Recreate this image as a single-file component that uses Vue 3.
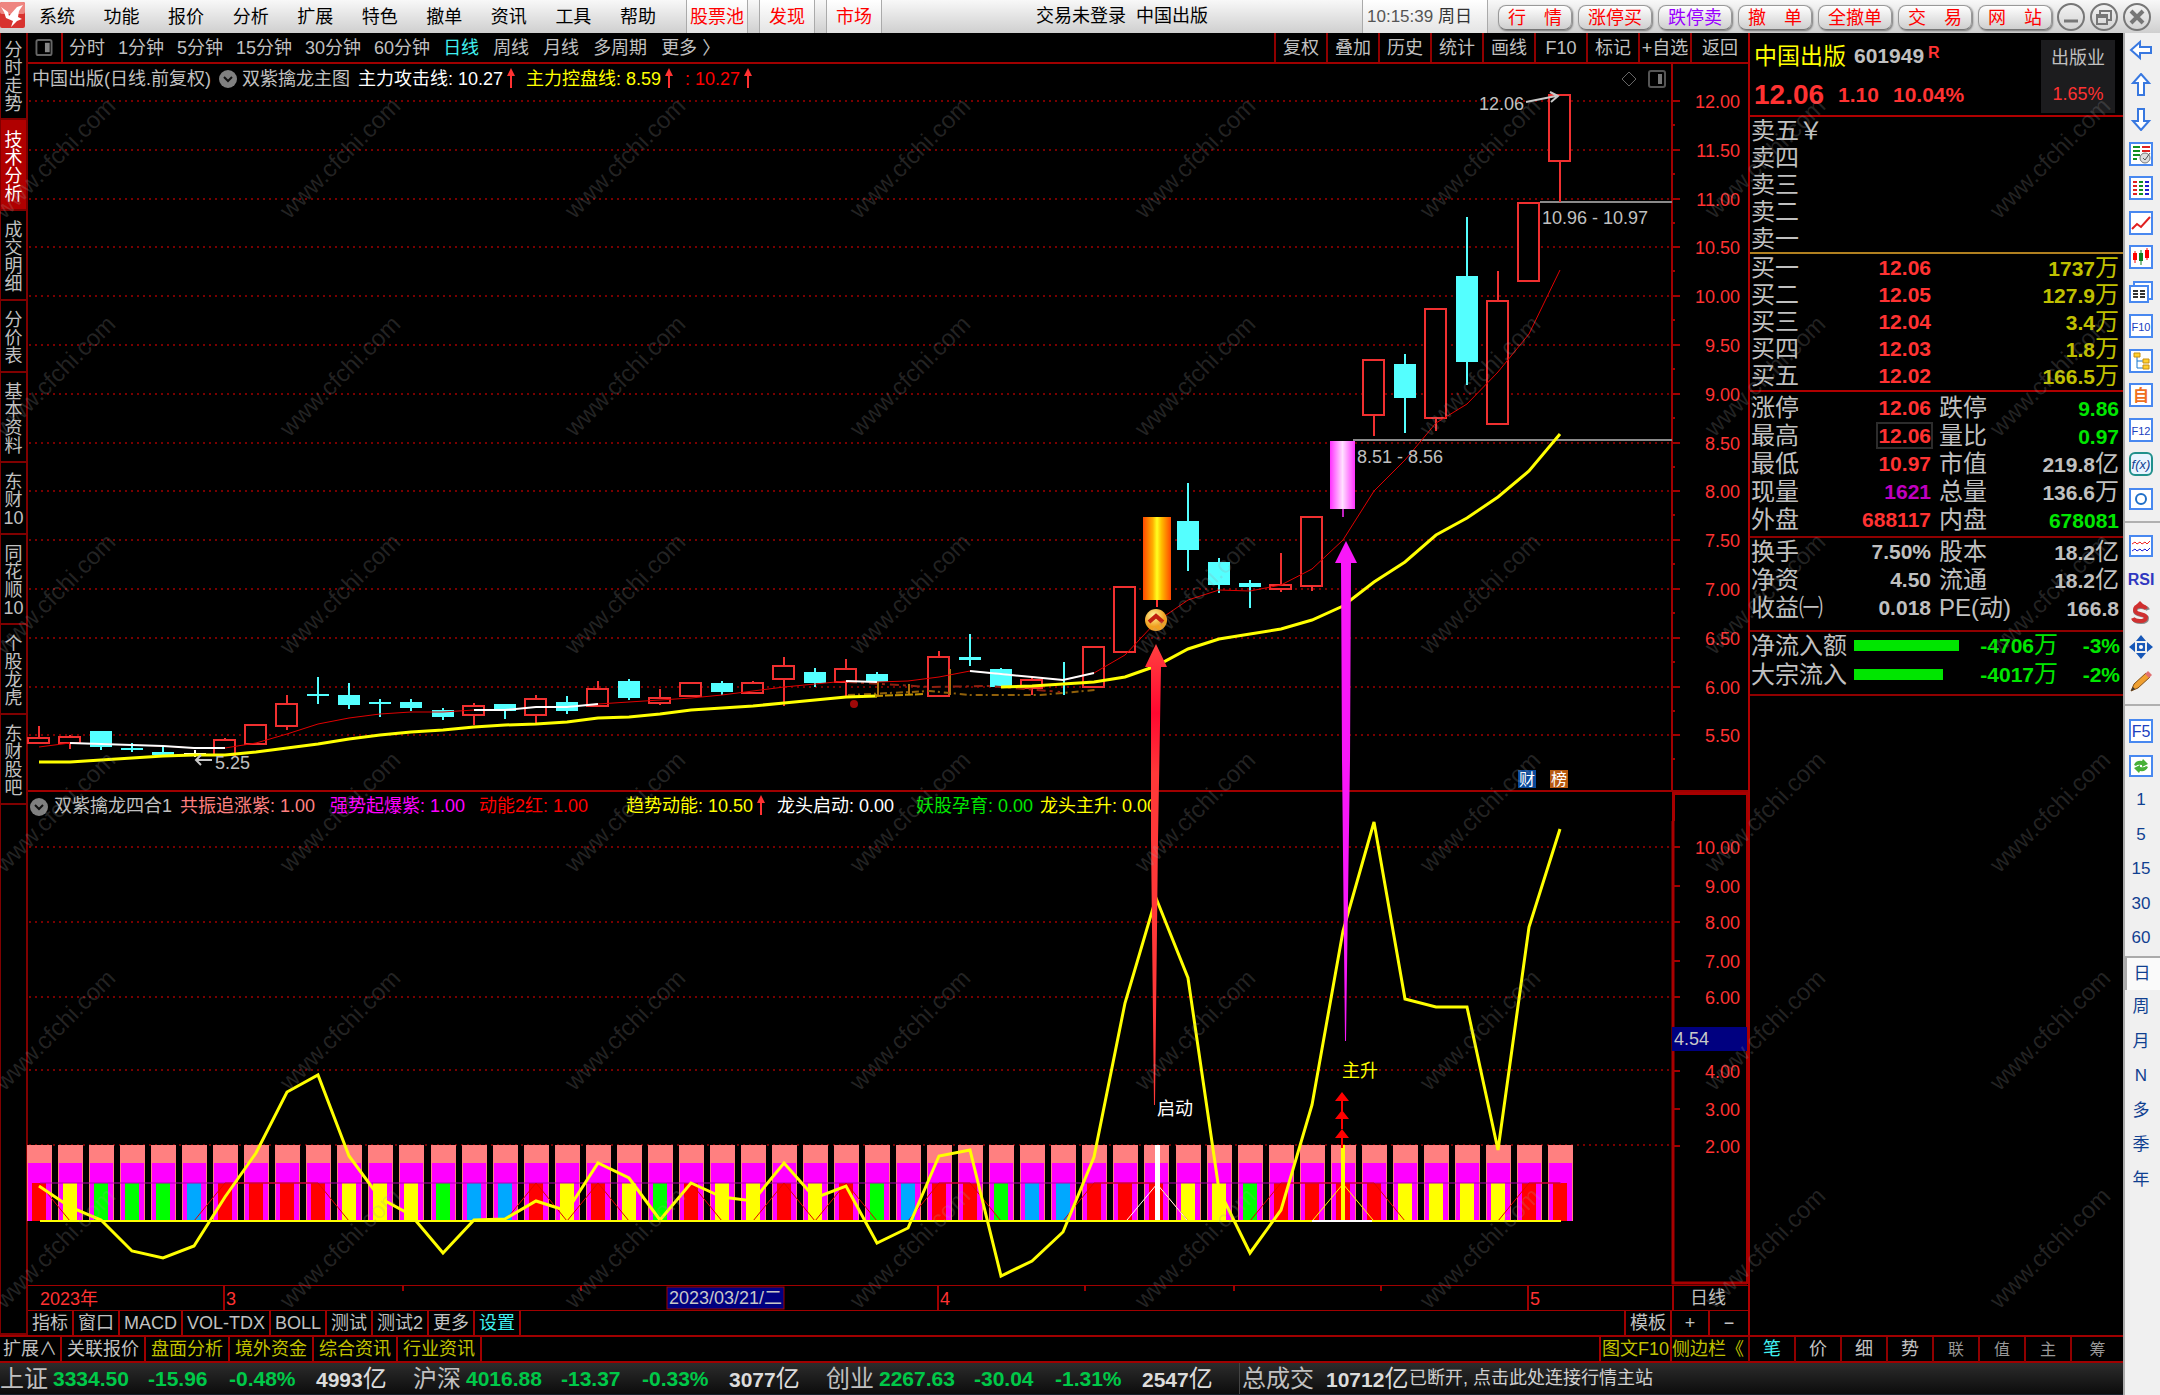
<script setup>
const menus = ['系统', '功能', '报价', '分析', '扩展', '特色', '撤单', '资讯', '工具', '帮助']
const hot = ['股票池', '发现', '市场']
const actions = [
  { t: '行　情' }, { t: '涨停买' }, { t: '跌停卖', sell: true }, { t: '撤　单' },
  { t: '全撤单' }, { t: '交　易' }, { t: '网　站' },
]
const sideTabs = [
  ['分', '时', '走', '势'], ['技', '术', '分', '析'], ['成', '交', '明', '细'], ['分', '价', '表'],
  ['基', '本', '资', '料'], ['东', '财', '10'], ['同', '花', '顺', '10'], ['个', '股', '龙', '虎'],
  ['东', '财', '股', '吧'],
]
const minutes = ['分时', '1分钟', '5分钟', '15分钟', '30分钟', '60分钟']
const periods = ['日线', '周线', '月线', '多周期', '更多 〉']
const chartTools = ['复权', '叠加', '历史', '统计', '画线', 'F10', '标记', '+自选', '返回']
const indicatorTabs = ['指标', '窗口', 'MACD', 'VOL-TDX', 'BOLL', '测试', '测试2', '更多', '设置']
const extTabs = ['扩展∧', '关联报价', '盘面分析', '境外资金', '综合资讯', '行业资讯']
const quoteTabs = ['笔', '价', '细', '势', '联', '值', '主', '筹']

const X0 = 39
const x = (i) => Math.round(X0 + (i * 1521) / 49)

// kind, body top, body bottom, high, low
const candles = [
  ['r', 738, 743, 726, 744], ['r', 737, 743, 735, 749], ['c', 731, 747, 731, 750], ['c', 748, 750, 743, 752],
  ['c', 752, 755, 747, 755], ['w', 753, 755, 750, 757], ['r', 740, 755, 738, 755], ['r', 725, 744, 725, 744],
  ['r', 704, 726, 695, 730], ['c', 694, 696, 677, 704], ['c', 695, 705, 683, 709], ['c', 702, 704, 699, 717],
  ['c', 702, 708, 699, 711], ['c', 710, 717, 708, 720], ['r', 706, 715, 703, 725], ['c', 704, 711, 704, 719],
  ['r', 699, 715, 695, 723], ['c', 702, 711, 696, 714], ['r', 689, 706, 681, 706], ['c', 681, 698, 679, 700],
  ['r', 698, 703, 689, 705], ['r', 683, 696, 683, 696], ['c', 683, 692, 681, 695], ['r', 683, 693, 681, 694],
  ['r', 666, 679, 657, 706], ['c', 672, 683, 668, 687], ['r', 669, 682, 659, 696], ['c', 674, 682, 672, 682],
  ['n', 684, 694, 684, 694], ['r', 657, 696, 651, 696], ['c', 657, 660, 634, 666], ['c', 669, 687, 668, 687],
  ['r', 680, 688, 678, 695], ['l', 680, 681, 662, 695], ['r', 647, 687, 647, 687], ['r', 587, 652, 587, 652],
  ['o', 517, 600, 517, 607], ['c', 521, 550, 483, 571], ['c', 562, 585, 558, 593], ['c', 583, 587, 580, 608],
  ['r', 585, 589, 553, 592], ['r', 517, 586, 517, 591], ['m', 441, 509, 441, 517], ['r', 360, 415, 360, 436],
  ['c', 364, 398, 354, 433], ['r', 309, 418, 309, 431], ['c', 276, 362, 217, 385], ['r', 301, 424, 271, 424],
  ['r', 203, 281, 203, 281], ['r', 95, 161, 95, 202],
]
const drawn = candles
  .map(([kind, top, bottom, high, low], i) => ({ i, kind, top, bottom, high, low, x: x(i) }))
const hollow = drawn.filter((c) => c.kind === 'r')
const solid = drawn.filter((c) => c.kind === 'c')

const join = (ys, from = 0) => ys.map((y, i) => `${x(i + from)},${y}`).join(' ')
const attack = [
  747, 743, 744, 745, 746, 748, 748, 743, 734, 724, 718, 714, 712, 712, 710, 710, 707, 707, 704, 702, 700, 698, 695, 691, 687,
  684, 681, 682, 681, 677, 671, 674, 677, 680, 673, 655, 622, 600, 590, 591, 585, 569, 540, 491, 460, 423, 404, 372, 334, 270,
]
const control = [
  762, 762, 760, 758, 756, 755, 755, 752, 748, 744, 739, 735, 732, 730, 727, 725, 724, 722, 718, 717, 714, 710, 708, 706, 703,
  700, 697, 696,
]
const controlTail = [
  687, 686, 684, 682, 677, 666, 649, 639, 634, 629, 620, 606, 582, 562, 535, 518, 497, 471, 434,
]
const trend = [
  1186, 1207, 1220, 1251, 1258, 1246, 1197, 1153, 1092, 1075, 1156, 1198, 1215, 1253, 1220, 1219, 1201, 1211, 1163, 1178,
  1220, 1183, 1197, 1201, 1163, 1198, 1186, 1243, 1228, 1156, 1150, 1276, 1261, 1232, 1157, 1003, 898, 978, 1190, 1253,
  1210, 1105, 931, 822, 999, 1007, 1007, 1150, 927, 829,
]
const whites = [[1, 6], [14, 18], [26, 27], [30, 34]].map(([a, b]) => join(attack.slice(a, b + 1), a))

const kinds = 'RYGGGBRRRRYYYGBBRYRYGRYYRYRGBRRGBBRRRYYGRRRRYYYYRR'.split('')
const palette = { R: '#ff0000', Y: '#ffff00', G: '#00ff00', B: '#00a8ff' }
const bars = kinds.map((k, i) => ({ x: x(i), color: palette[k] }))
const redPulse = join(kinds.map((k) => (k === 'R' ? 1183 : 1221)))

const priceLabels = Array.from({ length: 14 }, (_, i) => ({
  t: (12 - i / 2).toFixed(2),
  y: Math.round(101 + i * 48.8),
}))
const minorTicks = priceLabels.map((p) => p.y + 24)
const subLabels = [
  ['10.00', 847], ['9.00', 886], ['8.00', 922], ['7.00', 961], ['6.00', 997], ['4.00', 1071], ['3.00', 1109], ['2.00', 1146],
]
const subGrid = [847, 922, 997, 1070, 1145]

const mainLegend = [
  { t: '主力攻击线: 10.27', c: 'white', up: true },
  { t: '主力控盘线: 8.59', c: 'yellow', up: true },
  { t: ': 10.27', c: 'red', up: true },
]
const subLegend = [
  { t: '共振追涨紫: 1.00', c: 'salmon' }, { t: '强势起爆紫: 1.00', c: 'magenta' }, { t: '动能2红: 1.00', c: 'red' },
  { t: '趋势动能: 10.50', c: 'yellow', up: true }, { t: '龙头启动: 0.00', c: 'white' },
  { t: '妖股孕育: 0.00', c: 'green' }, { t: '龙头主升: 0.00', c: 'yellow' },
]

const sells = ['卖五', '卖四', '卖三', '卖二', '卖一']
const buys = [
  ['买一', '12.06', '1737', '万'], ['买二', '12.05', '127.9', '万'], ['买三', '12.04', '3.4', '万'],
  ['买四', '12.03', '1.8', '万'], ['买五', '12.02', '166.5', '万'],
]
const stats = [
  ['涨停', '12.06', 'up', '跌停', '9.86', '', 'down'],
  ['最高', '12.06', 'up boxed', '量比', '0.97', '', 'down'],
  ['最低', '10.97', 'up', '市值', '219.8', '亿', ''],
  ['现量', '1621', 'now', '总量', '136.6', '万', ''],
  ['外盘', '688117', 'up', '内盘', '678081', '', 'down'],
]
const basics = [
  ['换手', '7.50%', '', '股本', '18.2', '亿', ''],
  ['净资', '4.50', '', '流通', '18.2', '亿', ''],
  ['收益㈠', '0.018', '', 'PE(动)', '166.8', '', ''],
]
const flows = [['净流入额', 105, '-4706', '-3%'], ['大宗流入', 89, '-4017', '-2%']]
const indices = [
  ['上证', '3334.50', '-15.96', '-0.48%', '4993'],
  ['沪深', '4016.88', '-13.37', '-0.33%', '3077'],
  ['创业', '2267.63', '-30.04', '-1.31%', '2547'],
]
const shortcuts = ['1', '5', '15', '30', '60', '日', '周', '月', 'N', '多', '季', '年']

const marks = []
for (let r = 0; r < 6; r++) for (let c = 0; c < 8; c++) marks.push({ x: 55 + c * 285, y: 125 + r * 218 })
</script>

<template>
  <div class="page">
    <header class="topbar">
      <svg class="logo" viewBox="0 0 25 26" aria-hidden="true">
        <rect width="25" height="26" rx="2" fill="#d8332f" />
        <rect width="25" height="12" rx="2" fill="#ee8580" />
        <path d="M1 5 L8 10 L9 14 L17 5 L23 3 L19 9 L18 15 L22 17 L17 19 L11 25 L13 19 L6 16 L4 10 Z" fill="#fff" />
      </svg>
      <nav class="menus"><button v-for="m in menus" :key="m">{{ m }}</button></nav>
      <nav class="hot"><button v-for="h in hot" :key="h">{{ h }}</button></nav>
      <div class="title">交易未登录&nbsp; 中国出版</div>
      <div class="clock">10:15:39 <span>周日</span></div>
      <div class="actions">
        <button v-for="a in actions" :key="a.t" :class="{ sell: a.sell }">{{ a.t }}</button>
      </div>
      <div class="window">
        <button aria-label="最小化"><svg viewBox="0 0 30 30"><circle cx="15" cy="15" r="13" /><path d="M8 19h14" stroke-width="3" /></svg></button>
        <button aria-label="还原"><svg viewBox="0 0 30 30"><circle cx="15" cy="15" r="13" /><path d="M11 13V9h11v9h-4M8 13h10v9H8zM8 15h10" stroke-width="2" /></svg></button>
        <button aria-label="关闭"><svg viewBox="0 0 30 30"><circle cx="15" cy="15" r="13" /><path d="M9 9l12 12M21 9L9 21" stroke-width="4" /></svg></button>
      </div>
    </header>

    <div class="body">
      <div class="left">
        <div class="work">
          <nav class="side">
            <button v-for="(t, i) in sideTabs" :key="i" :class="{ active: i === 1, first: i === 0 }">
              <span v-for="ch in t" :key="ch">{{ ch }}</span>
            </button>
            <div class="side-rest"></div>
          </nav>

          <main class="center">
            <div class="toolbar">
              <button class="panel-toggle" aria-label="面板">
                <svg viewBox="0 0 18 18"><rect x="1" y="1" width="16" height="16" rx="2" fill="none" stroke="#666" stroke-width="2" /><rect x="10" y="4" width="5" height="10" fill="#888" /></svg>
              </button>
              <div class="minutes"><button v-for="m in minutes" :key="m">{{ m }}</button></div>
              <div class="periods"><button v-for="(p, i) in periods" :key="p" :class="{ on: i === 0 }">{{ p }}</button></div>
              <div class="chart-tools"><button v-for="t in chartTools" :key="t">{{ t }}</button></div>
            </div>

            <div class="charts">
              <section>
                <div class="legend-row">
                  <div class="legend main-legend">
                    <span class="gray">中国出版(日线.前复权)</span>
                    <svg class="chev" viewBox="0 0 18 18"><circle cx="9" cy="9" r="9" fill="#808080" /><path d="M5 7l4 4 4-4" fill="none" stroke="#111" stroke-width="2" /></svg>
                    <span class="gray">双紫擒龙主图</span>
                    <span v-for="l in mainLegend" :key="l.t" :class="l.c">{{ l.t }}<svg class="up-arrow" viewBox="0 0 8 20"><path d="M4 0l4 8H5v12H3V8H0z" fill="#ff3232" /></svg></span>
                  </div>
                  <div class="pane-icons">
                    <svg viewBox="0 0 18 18"><path d="M9 2l7 7-7 7-7-7z" fill="none" stroke="#666" stroke-width="1" /></svg>
                    <svg viewBox="0 0 18 18"><rect x="1" y="1" width="16" height="16" rx="2" fill="none" stroke="#555" stroke-width="2" /><rect x="10" y="4" width="4" height="10" fill="#777" /></svg>
                  </div>
                  <div class="axis-head"></div>
                </div>
                <svg class="plot" viewBox="28 94 1720 697" role="img" aria-label="日K线图">
                  <defs>
                    <linearGradient id="gold"><stop offset="0" stop-color="#ff4800" /><stop offset=".35" stop-color="#ffb000" /><stop offset=".5" stop-color="#ffff20" /><stop offset=".65" stop-color="#ffc000" /><stop offset="1" stop-color="#ff4800" /></linearGradient>
                    <linearGradient id="violet"><stop offset="0" stop-color="#ff30ff" /><stop offset=".5" stop-color="#ffe0ff" /><stop offset="1" stop-color="#ff30ff" /></linearGradient>
                    <radialGradient id="coin" cx=".4" cy=".3"><stop offset="0" stop-color="#fff8a0" /><stop offset="1" stop-color="#f0a020" /></radialGradient>
                  </defs>
                  <g class="grid"><path v-for="p in priceLabels" :key="p.y" :d="`M29 ${p.y}H1672`" /></g>
                  <path class="frame" d="M1672 94V791" />
                  <g class="tick"><path v-for="p in priceLabels" :key="p.y" :d="`M1672 ${p.y}h8`" /><path v-for="m in minorTicks" :key="m" :d="`M1672 ${m}h3`" /></g>
                  <g class="axis-text"><text v-for="p in priceLabels" :key="p.t" x="1740" :y="p.y + 7">{{ p.t }}</text></g>
                  <path d="M1540 202H1672M1353 440H1672" stroke="#8a8a8a" stroke-width="2" />
                  <g class="hollow">
                    <template v-for="c in hollow" :key="c.i">
                      <path :d="`M${c.x} ${c.high}V${c.top}M${c.x} ${c.bottom}V${c.low}`" />
                      <rect :x="c.x - 11" :y="c.top" width="21" :height="c.bottom - c.top" />
                    </template>
                  </g>
                  <g class="solid">
                    <template v-for="c in solid" :key="c.i">
                      <path :d="`M${c.x} ${c.high}V${c.low}`" />
                      <rect :x="c.x - 11" :y="c.top" width="22" :height="c.bottom - c.top" />
                    </template>
                    <path d="M1064 662V695" />
                  </g>
                  <path d="M184 754h22M195 750v7" stroke="#fff" stroke-width="2" />
                  <path d="M1157 600v7" stroke="#ff3232" stroke-width="2" />
                  <path d="M1343 509v8" stroke="#c020c0" stroke-width="2" />
                  <rect x="1143" y="517" width="28" height="83" fill="url(#gold)" />
                  <rect x="1330" y="441" width="25" height="68" fill="url(#violet)" />
                  <g class="smudge">
                    <path d="M848 695L930 691 970 695 1040 695 1095 690" stroke="#90600a" stroke-dasharray="7 3 2 4" />
                    <path d="M848 682L930 687 990 686 1060 692" stroke="#902010" stroke-dasharray="9 4 3 5" />
                    <path d="M878 682V695M909 684V694M950 669V695" stroke="#b07010" />
                    <circle cx="854" cy="704" r="4" fill="#a00808" />
                  </g>
                  <polyline :points="join(attack)" fill="none" stroke="#e00000" stroke-width="1" />
                  <polyline v-for="w in whites" :key="w" :points="w" fill="none" stroke="#fff" stroke-width="2" />
                  <polyline :points="join(control)" class="ctrl" />
                  <polyline :points="join(controlTail, 31)" class="ctrl" />
                  <path d="M875 696L925 694" stroke="#c09000" stroke-width="2" stroke-dasharray="8 2" />
                  <circle cx="1156" cy="620" r="11" fill="url(#coin)" />
                  <path d="M1149 622l7-6 7 6" fill="none" stroke="#c02010" stroke-width="4" />
                  <g class="note">
                    <text x="1479" y="110">12.06</text>
                    <text x="1542" y="224">10.96 - 10.97</text>
                    <text x="1357" y="463">8.51 - 8.56</text>
                    <text x="215" y="769">5.25</text>
                  </g>
                  <path d="M1526 102L1556 96M1550 92l8 4-7 6M212 760H196M201 755l-5 5 5 5" fill="none" stroke="#c8c8c8" stroke-width="2" />
                  <rect x="1518" y="770" width="18" height="18" fill="#0a4a9a" />
                  <rect x="1550" y="770" width="18" height="18" fill="#b85a10" />
                  <text x="1519" y="785" class="badge">财</text>
                  <text x="1551" y="785" class="badge">榜</text>
                </svg>
              </section>

              <section class="sub">
                <div class="legend-row">
                  <div class="legend sub-legend">
                    <svg class="chev" viewBox="0 0 18 18"><circle cx="9" cy="9" r="9" fill="#808080" /><path d="M5 7l4 4 4-4" fill="none" stroke="#111" stroke-width="2" /></svg>
                    <span class="gray">双紫擒龙四合1</span>
                    <span v-for="l in subLegend" :key="l.t" :class="l.c">{{ l.t }}<svg v-if="l.up" class="up-arrow" viewBox="0 0 8 20"><path d="M4 0l4 8H5v12H3V8H0z" fill="#ff3232" /></svg></span>
                  </div>
                  <div class="axis-head thick"></div>
                </div>
                <svg class="plot" viewBox="28 821 1720 464" role="img" aria-label="四合一指标图">
                  <g class="grid"><path v-for="y in subGrid" :key="y" :d="`M29 ${y}H1672`" /></g>
                  <path d="M1673 821V1283H1747" fill="none" stroke="#a80000" stroke-width="3" />
                  <path d="M1747 821V1284" stroke="#a80000" stroke-width="2" />
                  <g class="tick"><path v-for="l in subLabels" :key="l[0]" :d="`M1672 ${l[1]}h8`" /></g>
                  <g class="axis-text"><text v-for="l in subLabels" :key="l[0]" x="1740" :y="l[1] + 7">{{ l[0] }}</text></g>
                  <rect x="1672" y="1027" width="75" height="24" fill="#000080" />
                  <text x="1674" y="1045" class="cursor">4.54</text>
                  <g v-for="(b, i) in bars" :key="i">
                    <rect :x="b.x - 12" y="1145" width="25" height="76" fill="#ff8080" />
                    <rect :x="b.x - 11" y="1163" width="23" height="58" fill="#ff00ff" />
                    <rect :x="b.x - 7" y="1183" width="14" height="38" :fill="b.color" />
                  </g>
                  <path d="M40 1183H1561" stroke="#b000b0" stroke-width="1" />
                  <polyline :points="redPulse" fill="none" stroke="#e00000" stroke-width="1" />
                  <rect x="1155" y="1145" width="5" height="76" fill="#fff" />
                  <rect x="1341" y="1145" width="4" height="76" fill="#ff0" />
                  <path d="M1127 1220l30-36 30 36" fill="none" stroke="#fff" />
                  <path d="M1313 1220l30-36 30 36" fill="none" stroke="#ff0" />
                  <path d="M40 1221H1561" stroke="#ff0" stroke-width="2" />
                  <path d="M1312 1221h60" stroke="#fff" stroke-width="2" />
                  <polyline :points="join(trend)" fill="none" stroke="#ffff00" stroke-width="3" />
                  <path d="M1342 1092l7 9h-6v10h-2v-10h-6zM1342 1110l7 9h-6v10h-2v-10h-6zM1342 1129l7 9h-6v10h-2v-10h-6z" fill="#f00" />
                  <text x="1157" y="1115" class="mark white-t">启动</text>
                  <text x="1342" y="1077" class="mark yellow-t">主升</text>
                </svg>
              </section>

              <svg class="arrows" viewBox="28 64 1720 1221" aria-hidden="true">
                <defs><linearGradient id="shaft" x1="0" y1="0" x2="0" y2="1"><stop offset="0" stop-color="#ff4040" /><stop offset=".15" stop-color="#ff0830" /><stop offset=".28" stop-color="#ff3838" /><stop offset="1" stop-color="#ff3838" /></linearGradient></defs>
                <path d="M1156 644l11 23h-6L1158 840 1155 1105h-1L1151 840V667h-6z" fill="url(#shaft)" />
                <path d="M1346 541l11 22h-6L1350 760 1346 1041h-1L1342 760 1341 563h-6z" fill="#f818f8" />
              </svg>
            </div>

            <div class="dates">
              <svg viewBox="28 1285 1644 24" aria-label="日期轴">
                <path d="M224 1285v24M938 1285v24M1528 1285v24M403 1285v5M581 1285v5M1085 1285v5M1234 1285v5M1381 1285v5" stroke="#a00000" stroke-width="2" />
                <g fill="#ff3232" font-size="18"><text x="40" y="1304">2023年</text><text x="226" y="1304">3</text><text x="940" y="1304">4</text><text x="1530" y="1304">5</text></g>
                <rect x="667" y="1286" width="117" height="22" fill="#000080" stroke="#a00000" />
                <text x="669" y="1303" font-size="18" fill="#c8c8c8">2023/03/21/二</text>
              </svg>
              <div class="period">日线</div>
            </div>
            <div class="tabs">
              <button v-for="(t, i) in indicatorTabs" :key="t" :class="{ on: i === 8 }">{{ t }}</button>
              <button class="template">模板</button>
              <button class="zoom">+</button>
              <button class="zoom">−</button>
            </div>
          </main>

          <aside class="quote">
            <div class="q-head">
              <div class="q-main">
                <div class="q-name"><b>中国出版</b><span class="code">601949</span><sup>R</sup></div>
                <div class="q-price"><strong>12.06</strong><span>1.10</span><span>10.04%</span></div>
              </div>
              <div class="sector"><span>出版业</span><em>1.65%</em></div>
            </div>
            <table class="book sell-book"><tbody>
              <tr v-for="(s, i) in sells" :key="s"><th>{{ s }}<span v-if="i === 0">￥</span></th></tr>
            </tbody></table>
            <table class="book"><tbody>
              <tr v-for="b in buys" :key="b[0]">
                <th>{{ b[0] }}</th><td class="price up">{{ b[1] }}</td><td class="vol">{{ b[2] }}<i>{{ b[3] }}</i></td>
              </tr>
            </tbody></table>
            <table class="stat"><tbody>
              <tr v-for="s in stats" :key="s[0]">
                <th>{{ s[0] }}</th><td :class="s[2]"><span>{{ s[1] }}</span></td>
                <th class="second">{{ s[3] }}</th><td class="wide" :class="s[6]">{{ s[4] }}<i>{{ s[5] }}</i></td>
              </tr>
            </tbody></table>
            <table class="stat basics"><tbody>
              <tr v-for="s in basics" :key="s[0]">
                <th>{{ s[0] }}</th><td><span>{{ s[1] }}</span></td>
                <th class="second">{{ s[3] }}</th><td class="wide">{{ s[4] }}<i>{{ s[5] }}</i></td>
              </tr>
            </tbody></table>
            <div class="flows">
              <div v-for="f in flows" :key="f[0]" class="flow">
                <span class="f-name">{{ f[0] }}</span>
                <span class="f-track"><span class="f-bar" :style="{ width: f[1] + 'px' }"></span></span>
                <span class="f-num">{{ f[2] }}<i>万</i></span>
                <span class="f-pct">{{ f[3] }}</span>
              </div>
            </div>
          </aside>
        </div>

        <div class="ext">
          <div class="ext-tabs">
            <button v-for="(t, i) in extTabs" :key="t" :class="{ gold: i > 1, narrow: i === 0 }">{{ t }}</button>
            <button class="gold f10">图文F10</button>
            <button class="gold bar">侧边栏《</button>
          </div>
          <div class="quote-tabs">
            <button v-for="(t, i) in quoteTabs" :key="t" :class="{ on: i === 0, dim: i > 3 }">{{ t }}</button>
          </div>
        </div>

        <footer class="status">
          <div v-for="n in indices" :key="n[0]" class="index">
            <span class="i-name">{{ n[0] }}</span><b>{{ n[1] }}</b><b>{{ n[2] }}</b><b>{{ n[3] }}</b><b class="amt">{{ n[4] }}<i>亿</i></b>
          </div>
          <div class="total"><span class="i-name">总成交</span><b class="amt">10712<i>亿</i></b></div>
          <a href="#">已断开, 点击此处连接行情主站</a>
        </footer>

        <svg class="marks" aria-hidden="true">
          <text v-for="(m, i) in marks" :key="i" text-anchor="middle" :transform="`translate(${m.x} ${m.y}) rotate(-45)`" y="8">www.cfchi.com</text>
        </svg>
      </div>

      <aside class="tools">
        <div class="group long">
          <button aria-label="后退"><svg viewBox="0 0 24 24"><path d="M2 12l9-8v5h11v6H11v5z" class="arr" /></svg></button>
          <button aria-label="上移"><svg viewBox="0 0 24 24"><path d="M12 1l8 9h-5v12H9V10H4z" class="arr" /></svg></button>
          <button aria-label="下移"><svg viewBox="0 0 24 24"><path d="M12 23l8-9h-5V2H9v12H4z" class="arr" /></svg></button>
          <button aria-label="选股"><svg viewBox="0 0 24 24"><rect x="1" y="1" width="22" height="22" class="box" /><path d="M4 5h7M4 9h7M4 13h7M4 17h4" stroke="#109020" stroke-width="2" /><path d="M13 5h8M13 9h8" stroke="#e02020" stroke-width="2" /><circle cx="16" cy="16" r="5" fill="#ddd" stroke="#777" /><path d="M14 16l2 2 5-7" fill="none" stroke="#555" /></svg></button>
          <button aria-label="行情表"><svg viewBox="0 0 24 24"><rect x="1" y="1" width="22" height="22" class="box" /><path d="M6 5v16" stroke="#e02020" stroke-width="4" stroke-dasharray="2 2" /><path d="M12 5v16" stroke="#109020" stroke-width="4" stroke-dasharray="2 2" /><path d="M18 5v16" stroke="#2020d0" stroke-width="4" stroke-dasharray="2 2" /></svg></button>
          <button aria-label="走势"><svg viewBox="0 0 24 24"><rect x="1" y="1" width="22" height="22" class="box" /><path d="M3 18l5-5 4 3 9-10" fill="none" stroke="#e02020" stroke-width="2" /></svg></button>
          <button aria-label="K线"><svg viewBox="0 0 24 24"><rect x="1" y="1" width="22" height="22" class="box" /><path d="M6 6v12M18 3v12" stroke="#f00" stroke-width="1" /><path d="M6 8v7M18 5v8" stroke="#f00" stroke-width="4" /><path d="M12 5v15" stroke="#108020" /><path d="M12 8v8" stroke="#108020" stroke-width="4" /></svg></button>
          <button aria-label="窗口"><svg viewBox="0 0 24 24"><rect x="5" y="2" width="18" height="17" class="box" /><rect x="1" y="6" width="18" height="16" class="box" /><path d="M4 11h5M11 11h5M4 14h5M11 14h5M4 17h5M11 17h5" stroke="#333" stroke-width="2" /></svg></button>
          <button aria-label="F10"><svg viewBox="0 0 24 24"><rect x="1" y="1" width="22" height="22" class="box" /><text x="12" y="17" class="key">F10</text></svg></button>
          <button aria-label="板块"><svg viewBox="0 0 24 24"><rect x="1" y="1" width="22" height="22" class="box" /><path d="M8 8v11h6M8 12h6" fill="none" stroke="#1878d0" /><path d="M5 4h6v4H5zM14 10h6v4h-6zM14 16h6v4h-6z" fill="#ffd030" stroke="#c89010" /></svg></button>
          <button aria-label="自选"><svg viewBox="0 0 24 24"><rect x="1" y="1" width="22" height="22" class="box" /><text x="12" y="18" class="self">自</text></svg></button>
          <button aria-label="F12"><svg viewBox="0 0 24 24"><rect x="1" y="1" width="22" height="22" class="box" /><text x="12" y="17" class="key">F12</text></svg></button>
          <button aria-label="公式"><svg viewBox="0 0 24 24"><rect x="1" y="1" width="22" height="22" rx="5" fill="#e8f4ff" stroke="#20908c" stroke-width="2" /><text x="12" y="17" class="fx">f(x)</text></svg></button>
          <button aria-label="设置"><svg viewBox="0 0 24 24"><rect x="1" y="2" width="22" height="20" class="box" /><circle cx="12" cy="12" r="5" fill="#fff" stroke="#2070c8" stroke-width="2" /></svg></button>
        </div>
        <div class="group short">
          <button aria-label="叠加线"><svg viewBox="0 0 24 24"><rect x="1" y="2" width="22" height="20" class="box" /><path d="M3 10l3-2 2 2 3-2 2 2 3-2 2 2 3-3" fill="none" stroke="#f02020" stroke-width="1" /><path d="M3 17l3-2 2 2 3-2 2 2 3-2 2 2 3-3" fill="none" stroke="#2020d0" stroke-width="1" /></svg></button>
          <button class="rsi">RSI</button>
          <button aria-label="资金"><svg viewBox="0 0 24 24"><path d="M19 9q-1-3-7-3-6 0-6 4 0 3 6 4t6 3q0 4-6 4t-7-3" fill="none" stroke="#888" stroke-width="4" /><path d="M17 8q-1-3-6-3-5 0-5 4 0 3 5 4t6 3q0 4-6 4t-7-3" fill="none" stroke="#d03030" stroke-width="4" /><path d="M11 0l4 4H7z" fill="#d03030" /></svg></button>
          <button aria-label="移动"><svg viewBox="0 0 24 24"><path d="M12 0l5 6H7zM12 24l5-6H7zM0 12l6-5v10zM24 12l-6-5v10zM8 8h8v8H8z" fill="#1858b8" /><circle cx="12" cy="12" r="2" fill="#fff" /></svg></button>
          <button aria-label="画笔"><svg viewBox="0 0 24 24"><path d="M2 22l3-7L17 4l4 4L9 19z" fill="#f0a030" stroke="#80501a" /><path d="M16 5l3-3 4 4-3 3z" fill="#e07070" /><path d="M2 22l2-4 2 2z" fill="#333" /></svg></button>
        </div>
        <div class="group long last">
          <button aria-label="F5"><svg viewBox="0 0 24 24"><rect x="1" y="1" width="22" height="22" class="box" /><text x="12" y="18" class="key big">F5</text></svg></button>
          <button aria-label="刷新"><svg viewBox="0 0 24 24"><rect x="1" y="2" width="22" height="20" class="box" /><path d="M5 11q2-5 8-4l1-2 5 5-6 3v-2q-5-1-6 1zM19 13q-2 5-8 4l-1 2-5-5 6-3v2q5 1 6-1z" fill="#48b038" /></svg></button>
          <button v-for="s in shortcuts" :key="s" class="key-btn" :class="{ pressed: s === '日' }">{{ s }}</button>
        </div>
      </aside>
    </div>
  </div>
</template>

<style>
html, body { background: #000; }
</style>

<style scoped>
.page { color: #c0c0c0; background: #000; font: 18px/24px "Liberation Sans", "Noto Sans CJK SC", sans-serif; overflow: hidden; }
.page * { box-sizing: border-box; }
button { font: inherit; color: inherit; background: none; border: 0; padding: 0; margin: 0; white-space: nowrap; }
svg { display: block; }
i, em { font-style: normal; }

.topbar { display: flex; height: 33px; color: #000; background: linear-gradient(#f8f8f8, #cfcfcf); }
.logo { width: 25px; height: 26px; margin-top: 2px; }
.menus { display: flex; justify-content: space-between; width: 617px; margin-left: 14px; }
.hot { display: flex; gap: 11px; margin-left: 30px; }
.hot button { color: #f00; padding: 0 9px; border: solid #aaa; border-width: 0 1px; background: linear-gradient(#fff, #e4e4e4); }
.hot button:first-child { padding: 0 3px; }
.title { flex: 1; text-align: center; line-height: 33px; }
.clock { width: 126px; padding-left: 4px; line-height: 33px; color: #555; font-size: 17px; border: solid #aaa; border-width: 0 1px; background: linear-gradient(#fff, #e4e4e4); }
.clock span { color: #333; }
.actions { display: flex; gap: 6px; padding: 5px 0 3px 10px; }
.actions button { width: 74px; color: #f00; border-radius: 8px; border: 1px solid #999; border-bottom-color: #777; background: linear-gradient(#fff, #cfcfcf); box-shadow: 1px 1px 2px #777; line-height: 20px; }
.actions .sell { color: #90f; }
.window { display: flex; gap: 3px; padding: 1px 8px 0 4px; }
.window svg { width: 30px; height: 30px; fill: none; stroke: #777; stroke-width: 2; }

.body { display: flex; }
.left { flex: 1; min-width: 0; position: relative; }
.work { display: flex; }

.side { width: 28px; display: flex; flex-direction: column; border: 2px solid #800000; border-width: 0 2px 2px 1px; }
.side button { display: flex; flex-direction: column; align-items: center; padding: 10px 0 6px; line-height: 18px; border-bottom: 2px solid #800000; }
.side .first { padding: 8px 0 5px; }
.side .active { padding: 11px 0 6px; background: #b00000; color: #fff; }
.side-rest { flex: 1; }

.center { flex: 1; min-width: 0; }
.toolbar { display: flex; height: 31px; border-bottom: 2px solid #a00000; }
.panel-toggle { width: 35px; padding-left: 7px; border-right: 2px solid #a00000; }
.panel-toggle svg { width: 18px; height: 17px; }
.minutes, .periods { display: flex; gap: 13px; padding-left: 6px; }
.periods { gap: 14px; padding-left: 13px; }
.on { color: #40f0f0; }
.chart-tools { display: grid; grid-template-columns: repeat(8, 52px) 1fr; width: 474px; margin-left: auto; }
.chart-tools button { border-left: 2px solid #900000; }

.charts { position: relative; }
.legend-row { display: flex; height: 30px; line-height: 30px; white-space: nowrap; }
.legend { flex: 1; display: grid; align-items: center; }
.main-legend { grid-template-columns: 187px 23px 116px 168px 159px 80px; padding-left: 4px; justify-content: start; }
.sub-legend { grid-template-columns: 24px 126px 150px 149px 147px 151px 139px 124px 120px; padding-left: 2px; justify-content: start; }
.chev { width: 18px; height: 18px; }
.up-arrow { display: inline-block; width: 8px; height: 20px; margin-left: 4px; vertical-align: -3px; }
.gray { color: #c0c0c0; } .white { color: #fff; } .yellow { color: #ff0; } .red { color: #f00; }
.salmon { color: #ff8080; } .magenta { color: #f0f; } .green { color: #00e600; }
.pane-icons { display: flex; gap: 10px; padding: 6px 5px 0 0; }
.pane-icons svg { width: 18px; height: 18px; }
.axis-head { width: 77px; border-left: 2px solid #a00000; }
.axis-head.thick { width: 76px; border: solid #a80000; border-width: 3px 2px 0 3px; }
.sub { border-top: 2px solid #a00000; margin-top: -1px; }
.sub .legend-row { height: 29px; line-height: 29px; }
.plot { width: 100%; height: auto; overflow: visible; }
.plot text { font-size: 18px; }
.grid path { stroke: #a00000; stroke-width: 2; stroke-dasharray: 2 4; opacity: 0.75; }
.frame, .tick path { stroke: #a00000; stroke-width: 2; }
.axis-text text { fill: #ff3232; text-anchor: end; }
.note text { fill: #c0c0c0; }
.hollow path { stroke: #f03030; stroke-width: 2; }
.hollow rect { fill: #000; stroke: #f03030; stroke-width: 2; }
.solid path { stroke: #54ffff; stroke-width: 2; }
.solid rect { fill: #54ffff; }
.smudge path { fill: none; stroke-width: 2; }
.ctrl { fill: none; stroke: #ffff00; stroke-width: 3; }
.plot .badge { fill: #fff; font-size: 16px; }
.plot .cursor { fill: #c8c8c8; }
.white-t { fill: #fff; } .yellow-t { fill: #ff0; }
.arrows { position: absolute; inset: 0; width: 100%; height: 100%; pointer-events: none; }

.dates { display: flex; border: solid #a00000; border-width: 1px 0; }
.dates svg { flex: 1; min-width: 0; }
.period { width: 76px; padding-right: 6px; text-align: center; border-left: 2px solid #a00000; }
.tabs { display: flex; height: 24px; line-height: 23px; }
.tabs button { padding: 0 4px; border-right: 2px solid #a00000; }
.tabs .template { margin-left: auto; border-left: 2px solid #a00000; }
.tabs .zoom { width: 38px; }
.tabs .zoom:last-child { border-right: 0; }

.quote { width: 375px; border-left: 2px solid #b00000; }
.q-head { display: flex; height: 84px; border-bottom: 2px solid #b00000; }
.q-main { flex: 1; padding: 7px 0 0 4px; }
.q-name { display: flex; align-items: center; gap: 8px; height: 32px; font-size: 21px; font-weight: bold; }
.q-name b { font-size: 23px; font-weight: normal; color: #ff0; }
.q-name sup { color: #ff3232; font-size: 16px; line-height: 16px; margin: -6px 0 0 -4px; }
.q-price { display: flex; align-items: center; gap: 14px; height: 46px; font-size: 21px; font-weight: bold; color: #ff3232; }
.q-price strong { font-size: 28px; }
.sector { display: flex; flex-direction: column; gap: 12px; width: 74px; height: 73px; margin: 7px 8px 0 0; padding-top: 6px; text-align: center; background: #1c1c1e; }
.sector em { color: #ff3232; }
table { border-collapse: collapse; width: 100%; table-layout: fixed; }
th { font-weight: normal; font-size: 24px; text-align: left; padding: 0 0 0 1px; white-space: nowrap; }
td { font-weight: bold; font-size: 21px; text-align: right; padding: 0; white-space: nowrap; }
td i { font-weight: normal; font-size: 24px; }
.book tr { height: 27px; line-height: 27px; }
.book, .stat { display: block; }
.book tbody, .stat tbody { display: block; }
.book tr, .stat tr { display: flex; }
.book th, .stat th { flex: none; width: 94px; }
.book .price, .stat td { width: 87px; flex: none; }
.book .vol { flex: 1; color: #c0c000; padding-right: 4px; }
.sell-book { border-bottom: 2px solid #b08020; }
.book + .book { padding-bottom: 1px; border-bottom: 2px solid #b00000; }
.up { color: #ff3232; } .down { color: #00e600; } .now { color: #c000c0; }
.stat { padding: 2px 0; border-bottom: 2px solid #900000; }
.stat tr { height: 28px; line-height: 28px; }
.stat .second { width: 70px; margin-left: 7px; }
.stat td.wide { flex: 1; padding-right: 4px; }
.boxed span { outline: 2px solid #2c2c2c; }
.basics { padding: 0 0 8px; }
.flows { padding-bottom: 4px; border-bottom: 2px solid #900000; font-size: 21px; }
.flow { display: flex; align-items: center; height: 29px; padding: 0 3px 2px 1px; color: #00e600; font-weight: bold; }
.f-name { width: 103px; font-size: 24px; font-weight: normal; color: #c0c0c0; }
.f-track { flex: 1; }
.f-bar { display: block; height: 11px; background: #00e600; }
.f-num { width: 82px; text-align: right; }
.f-num i { font-size: 24px; font-weight: normal; }
.f-pct { width: 62px; text-align: right; }

.ext { display: flex; height: 28px; line-height: 25px; border: solid #a00000; border-width: 2px 0; }
.ext-tabs { flex: 1; display: flex; }
.ext-tabs button { width: 84px; border-right: 2px solid #a00000; }
.ext-tabs .narrow { width: 62px; }
.ext-tabs .f10 { margin-left: auto; width: 73px; border-left: 2px solid #a00000; }
.ext-tabs .bar { width: 76px; text-align: left; border-right: 0; }
.gold { color: #c0c000; }
.quote-tabs { display: grid; grid-template-columns: repeat(7, 46px) 1fr; width: 375px; }
.quote-tabs button { border-left: 2px solid #900000; }
.quote-tabs .dim { font-size: 16px; color: #999; }

.status { display: flex; height: 33px; line-height: 31px; background: linear-gradient(#2c2c2c, #0c0c0c); border-bottom: 2px solid #18222c; white-space: nowrap; }
.index { display: grid; grid-template-columns: 53px 95px 81px 87px 97px; width: 413px; font-size: 21px; color: #00c848; }
.i-name { font-size: 24px; color: #c0c0c0; }
.status .amt { color: #dcdcdc; }
.amt i { font-size: 24px; font-weight: normal; }
.total { display: flex; gap: 12px; width: 170px; padding-left: 2px; font-size: 21px; border-left: 1px solid #444; }
.status a { color: #d0d0d0; text-decoration: none; }

.marks { position: absolute; inset: 0; width: 100%; height: 100%; pointer-events: none; overflow: hidden; }
.marks text { font-size: 24px; fill: #a0a0a0; fill-opacity: 0.22; }

.tools { width: 37px; background: #f0f0f0; border-left: 2px solid #aaa; color: #104090; }
.group { display: grid; grid-auto-rows: 1fr; justify-items: center; }
.group.long { height: 483px; }
.group.short { height: 185px; padding: 6px 0; margin-top: 5px; border: solid #b0b0b0; border-width: 2px 0; }
.group.last { margin-top: 8px; }
.group button { display: grid; place-items: center; width: 100%; padding-right: 3px; }
.group svg { width: 24px; height: 24px; }
.group .rsi { font-weight: bold; color: #3038c0; font-size: 16px; }
.key-btn { font-size: 17px; }
.pressed { background: #fafafa; border: solid #aaa; border-width: 2px 0 0 2px; }
.arr { fill: #fff; stroke: #3878e0; stroke-width: 2; }
.box { fill: #fff; stroke: #4888f0; stroke-width: 2; }
.key { font-size: 11px; fill: #2040c0; text-anchor: middle; }
.key.big { font-size: 16px; }
.self { font-size: 16px; fill: #f07020; text-anchor: middle; font-weight: bold; }
.fx { font-size: 13px; font-style: italic; fill: #104090; text-anchor: middle; }
</style>
